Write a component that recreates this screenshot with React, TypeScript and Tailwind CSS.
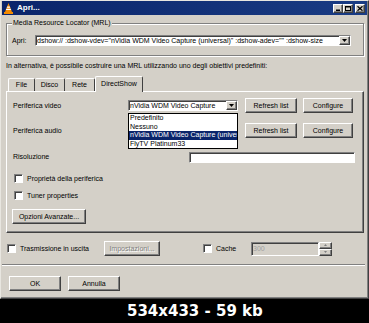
import React from "react";

const raised =
  "bg-[#d4d0c8] border border-t-white border-l-white border-r-[#404040] border-b-[#404040] shadow-[inset_-1px_-1px_#808080]";
const sunken =
  "border border-t-[#808080] border-l-[#808080] border-r-white border-b-white shadow-[inset_1px_1px_#404040]";

const Btn: React.FC<{ className?: string; disabled?: boolean; children: React.ReactNode }> = ({ className, disabled, children }) => (
  <div
    className={`${raised} h-[15px] flex items-center justify-center shrink-0 ${
      disabled ? "text-[#808080] [text-shadow:1px_1px_#fff]" : ""
    } ${className ?? ""}`}
  >
    {children}
  </div>
);

const Arrow = () => (
  <div className={`${raised} w-[11px] h-full flex items-center justify-center shrink-0`}>
    <svg width="5" height="3" viewBox="0 0 5 3">
      <path d="M0 0h5L2.5 3z" fill="#000" />
    </svg>
  </div>
);

const Combo: React.FC<{ className?: string; text: string }> = ({ className, text }) => (
  <div className={`${sunken} bg-white h-[11px] flex items-stretch shrink-0 ${className ?? ""}`}>
    <span className="flex-1 overflow-hidden whitespace-nowrap pl-[1px] leading-[9px]">{text}</span>
    <Arrow />
  </div>
);

const Check: React.FC<{ label: string; className?: string }> = ({ label, className }) => (
  <div className={`flex items-center gap-[4px] ${className ?? ""}`}>
    <div className={`${sunken} w-[9px] h-[9px] bg-white shrink-0`} />
    <span>{label}</span>
  </div>
);

const Cone = () => (
  <svg width="9" height="11" viewBox="0 0 9 11">
    <path d="M4.5 0L8 9H1z" fill="#f38a00" />
    <path d="M3.2 3.4h2.6l0.5 1.3H2.7zM2.3 5.8h4.4l0.5 1.3H1.8z" fill="#fff" />
    <rect x="0" y="9" width="9" height="2" fill="#f38a00" />
  </svg>
);

const TitleBtn: React.FC<{ children: React.ReactNode; className?: string }> = ({ children, className }) => (
  <div className={`${raised} w-[10px] h-[9px] flex items-center justify-center ${className ?? ""}`}>{children}</div>
);

export default function App() {
  return (
    <div className="w-[369px] h-[323px] bg-black flex flex-col font-['Liberation_Sans',Arial,sans-serif] text-[7px] leading-[8px] text-black">
      <div className="h-[299px] bg-[#d4d0c8] border border-t-[#e8e6e0] border-l-[#e8e6e0] border-r-[#404040] border-b-[#404040] shadow-[inset_-1px_-1px_#808080] flex flex-col px-[1px]">
        {/* title bar */}
        <div className="h-[14px] flex items-center bg-gradient-to-r from-[#0a246a] to-[#1a3c84] pl-[2px] pr-[2px]">
          <Cone />
          <span className="ml-[4px] text-white font-bold text-[8px]">Apri...</span>
          <div className="ml-auto flex items-center">
            <TitleBtn>
              <svg width="5" height="5" viewBox="0 0 5 5">
                <rect x="0" y="3.5" width="4" height="1.5" fill="#000" />
              </svg>
            </TitleBtn>
            <TitleBtn className="mr-[2px]">
              <svg width="6" height="5" viewBox="0 0 6 5">
                <rect x="0.5" y="0.5" width="5" height="4" fill="none" stroke="#000" />
                <rect x="0" y="0" width="6" height="1.5" fill="#000" />
              </svg>
            </TitleBtn>
            <TitleBtn>
              <svg width="6" height="5" viewBox="0 0 6 5">
                <path d="M0.5 0.3L5.5 4.7M5.5 0.3L0.5 4.7" stroke="#000" strokeWidth="1.3" />
              </svg>
            </TitleBtn>
          </div>
        </div>

        <div className="flex flex-col pl-[4px] pr-[3px]">
          {/* MRL group */}
          <div className="relative mt-[8px] h-[33px] border border-[#808080] shadow-[1px_1px_#fff,inset_1px_1px_#fff] pt-[11px] pl-[5px]">
            <span className="absolute top-[-5px] left-[5px] bg-[#d4d0c8] px-[1px]">Media Resource Locator (MRL)</span>
            <div className="flex items-center">
              <span className="w-[23px] shrink-0">Apri:</span>
              <Combo
                className="w-[316px]"
                text={'dshow:// :dshow-vdev="nVidia WDM Video Capture (universal)" :dshow-adev="" :dshow-size'}
              />
            </div>
          </div>

          <div className="mt-[6px] h-[8px] whitespace-nowrap">
            In alternativa, è possibile costruire una MRL utilizzando uno degli obiettivi predefiniti:
          </div>

          {/* tabs */}
          <div className="mt-[6px] h-[15px] flex items-end pl-[2px] relative z-10">
            <div className="h-[13px] w-[27px] flex items-center justify-center border-t border-l border-white border-r border-r-[#404040] rounded-t-[2px]">File</div>
            <div className="h-[13px] w-[30px] flex items-center justify-center border-t border-t-white border-r border-r-[#404040] rounded-t-[2px]">Disco</div>
            <div className="h-[13px] w-[30px] flex items-center justify-center border-t border-t-white border-r border-r-[#404040] rounded-t-[2px]">Rete</div>
            <div className="h-[16px] -mb-[1px] w-[48px] flex items-center justify-center bg-[#d4d0c8] border-t border-l border-white border-r border-r-[#404040] rounded-t-[2px] pb-[2px]">
              DirectShow
            </div>
          </div>

          {/* tab panel */}
          <div className="relative h-[142px] border border-t-white border-l-white border-r-[#404040] border-b-[#404040] shadow-[inset_-1px_-1px_#808080] pt-[6px] pl-[6px] flex flex-col">
            <div className="flex items-center h-[15px]">
              <span className="w-[115px] shrink-0">Periferica video</span>
              <Combo className="w-[110px]" text="nVidia WDM Video Capture" />
              <Btn className="ml-[7px] w-[52px]">Refresh list</Btn>
              <Btn className="ml-[6px] w-[50px]">Configure</Btn>
            </div>
            <div className="flex items-center h-[15px] mt-[10px]">
              <span className="w-[115px] shrink-0">Periferica audio</span>
              <Combo className="w-[110px]" text="" />
              <Btn className="ml-[7px] w-[52px]">Refresh list</Btn>
              <Btn className="ml-[6px] w-[50px]">Configure</Btn>
            </div>
            <div className="flex items-center h-[11px] mt-[14px]">
              <span className="w-[176px] shrink-0 -mt-[2px]">Risoluzione</span>
              <div className={`${sunken} bg-white w-[166px] h-[11px]`} />
            </div>
            <Check className="mt-[11px] ml-[1px] h-[9px]" label="Proprietà della periferica" />
            <Check className="mt-[8px] ml-[1px] h-[9px]" label="Tuner properties" />
            <Btn className="mt-[9px] -ml-[1px] w-[74px]">Opzioni Avanzate...</Btn>

            {/* open dropdown list */}
            <div className="absolute left-[121px] top-[21px] w-[110px] h-[36px] border border-black bg-white z-20 flex flex-col">
              <div className="h-[8.5px] leading-[8.5px] pl-[1px]">Predefinito</div>
              <div className="h-[8.5px] leading-[8.5px] pl-[1px]">Nessuno</div>
              <div className="h-[8.5px] leading-[8.5px] pl-[1px] bg-[#0a246a] text-white whitespace-nowrap overflow-hidden">
                nVidia WDM Video Capture (universal)
              </div>
              <div className="h-[8.5px] leading-[8.5px] pl-[1px]">FlyTV Platinum33</div>
            </div>
          </div>

          {/* bottom options */}
          <div className="mt-[8px] h-[15px] flex items-center">
            <Check className="ml-[1px] w-[97px] shrink-0" label="Trasmissione in uscita" />
            <Btn disabled className="w-[56px]">Impostazioni...</Btn>
            <Check className="ml-[43px] w-[48px] shrink-0" label="Cache" />
            <div className={`${sunken} w-[68px] h-[14px] bg-[#d4d0c8] text-[#a0a0a0] pl-[1px] flex items-center`}>300</div>
            <div className="w-[13px] h-[14px] flex flex-col">
              <div className={`${raised} flex-1 flex items-center justify-center`}>
                <svg width="3" height="2" viewBox="0 0 3 2">
                  <path d="M0 2h3L1.5 0z" fill="#808080" />
                </svg>
              </div>
              <div className={`${raised} flex-1 flex items-center justify-center`}>
                <svg width="3" height="2" viewBox="0 0 3 2">
                  <path d="M0 0h3L1.5 2z" fill="#808080" />
                </svg>
              </div>
            </div>
          </div>

          <div className="mt-[8px] -ml-[4px] -mr-[1px] h-[2px] border-t border-t-[#808080] border-b border-b-white" />

          <div className="mt-[10px] flex items-center">
            <Btn className="ml-[3px] w-[52px]">OK</Btn>
            <Btn className="ml-[7px] w-[52px]">Annulla</Btn>
          </div>
        </div>
      </div>

      <div className="flex-1 flex items-center pl-[127px] text-white font-['DejaVu_Sans',sans-serif] font-bold text-[15px] leading-none">
        534x433 - 59 kb
      </div>
    </div>
  );
}
